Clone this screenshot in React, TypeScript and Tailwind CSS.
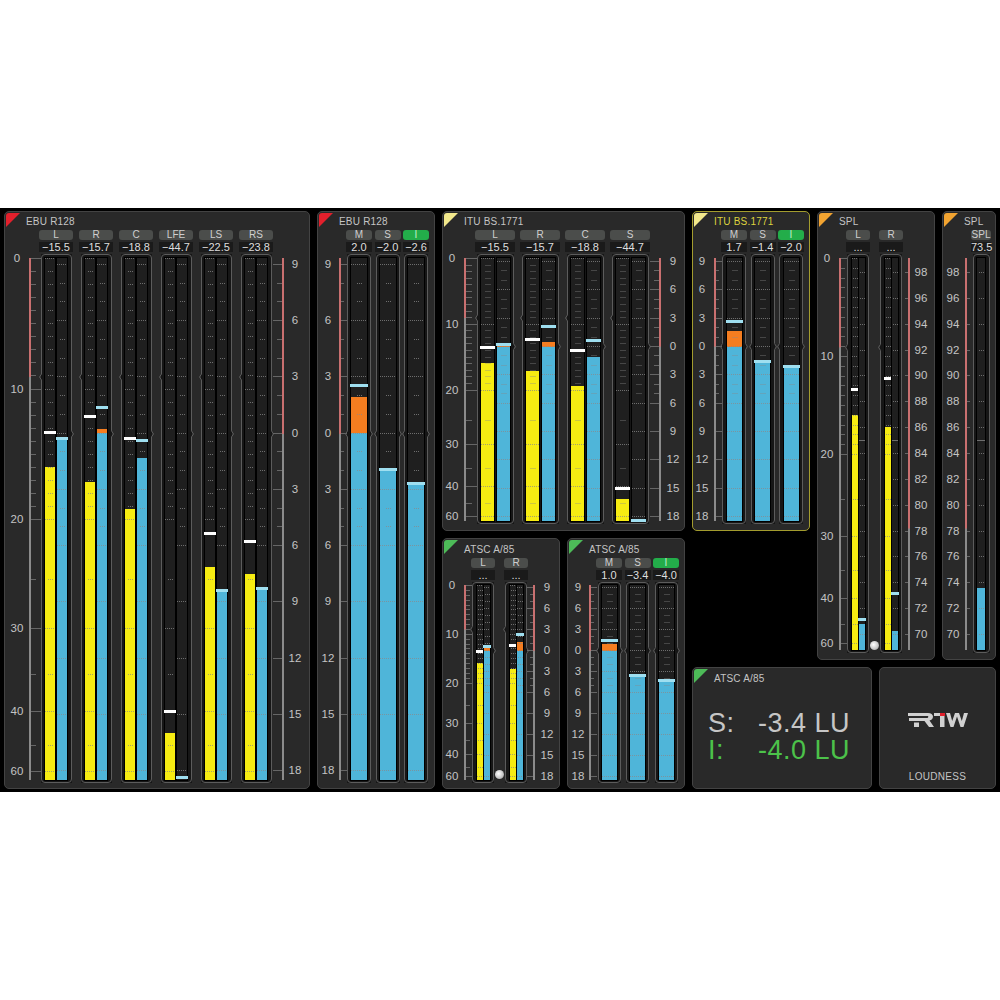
import React from 'react'

type Kind = 'lufs' | 'db' | 'spl'

type Side = { peak?: number; top?: number; orange?: number }
type Channel = { name: string; value: string; active?: boolean; l?: Side; r: Side }
type ScaleCfg = { kind: Kind; cls: string; line: number; label: number; major: number; pink: number }

const BAR_BOTTOM_GAP = 3

const lufsTable: Record<number, number> = { 25: 0.615, 30: 0.709, 35: 0.797, 40: 0.867, 50: 0.933, 60: 0.982 }
const lufsFrac = (v: number) => (v <= 20 ? v * 0.025 : lufsTable[v])
const dbFrac = (v: number) => 0.0115 + ((9 - v) / 27) * 0.9695
const splFrac = (v: number) => 0.0357 + ((98 - v) / 28) * 0.9233

function ticksFor(kind: Kind) {
  const out: { f: number; major: boolean }[] = []
  if (kind === 'lufs') {
    for (let v = 0; v <= 20; v++) out.push({ f: lufsFrac(v), major: v % 10 === 0 })
    for (const v of [25, 30, 35, 40, 50, 60]) out.push({ f: lufsFrac(v), major: v === 30 || v === 40 || v === 60 })
  } else if (kind === 'db') {
    for (let v = 9; v >= -18; v--) {
      const major = v % 3 === 0
      if (major || v > -6) out.push({ f: dbFrac(v), major })
    }
  } else {
    for (let v = 98; v >= 70; v -= 2) out.push({ f: splFrac(v), major: false })
  }
  return out
}

function labelsFor(kind: Kind) {
  if (kind === 'lufs') return [0, 10, 20, 30, 40, 60].map((v) => ({ t: String(v), f: lufsFrac(v) }))
  if (kind === 'db') {
    const out = []
    for (let v = 9; v >= -18; v -= 3) out.push({ t: String(Math.abs(v)), f: dbFrac(v) })
    return out
  }
  const out = []
  for (let v = 98; v >= 70; v -= 2) out.push({ t: String(v), f: splFrac(v) })
  return out
}

function Scale({ cfg, side, offset, height }: { cfg: ScaleCfg; side: 'left' | 'right'; offset: number; height: number }) {
  const dir = side === 'left' ? 1 : -1
  const start = cfg.line + dir * 1
  return (
    <div className={`shrink-0 ${cfg.cls}`} style={{ paddingTop: 24 + offset }}>
      <div className="relative" style={{ height }}>
        <svg className="absolute inset-0 overflow-visible" width="100%" height="100%">
          <rect x={cfg.line - 1} y={0} width={2} height={height} fill="#8b8b8b" />
          <rect x={cfg.line - 1} y={0} width={2} height={height * cfg.pink} fill="#c97070" />
          {ticksFor(cfg.kind).map((t, i) => {
            const y = Math.round(t.f * height) + 0.5
            const len = t.major ? cfg.major : Math.ceil(cfg.major * 0.5)
            return <line key={i} x1={start} x2={start + dir * len} y1={y} y2={y} stroke="#666666" />
          })}
        </svg>
        {labelsFor(cfg.kind).map((l) => (
          <span
            key={l.t + l.f}
            className="absolute -translate-x-1/2 -translate-y-1/2 text-[11.5px] leading-none text-[#c4c4c4]"
            style={{ left: cfg.label, top: Math.round(l.f * height) + 1 }}
          >
            {l.t}
          </span>
        ))}
      </div>
    </div>
  )
}

function StripTicks({ kind, height }: { kind: Kind; height: number }) {
  const ticks = ticksFor(kind)
  return (
    <svg className="absolute inset-0 overflow-hidden" width="100%" height="100%">
      {ticks
        .filter((t) => t.major)
        .map((t, i) => {
          const y = Math.round(t.f * height) + 0.5
          return <line key={i} x1="0" x2="100%" y1={y} y2={y} stroke="#8a8a8a" strokeOpacity="0.75" strokeDasharray="1 1" />
        })}
      {kind === 'spl' && <line x1="0" x2="100%" y1={Math.round(0.464 * height) + 0.5} y2={Math.round(0.464 * height) + 0.5} stroke="#8a8a8a" strokeOpacity="0.75" />}
      {ticks
        .filter((t) => !t.major)
        .map((t, i) => (
          <g key={i} fill="#8a8a8a" fillOpacity="0.75">
            <rect x="50%" y={Math.round(t.f * height)} width="1" height="1" transform="translate(-2 0)" />
            <rect x="50%" y={Math.round(t.f * height)} width="1" height="1" />
            <rect x="50%" y={Math.round(t.f * height)} width="1" height="1" transform="translate(2 0)" />
          </g>
        ))}
    </svg>
  )
}

function Strip({ side, color, kind, top, height, cls }: { side: Side; color: 'yellow' | 'blue'; kind: Kind; top: number; height: number; cls: string }) {
  const fill = color === 'yellow' ? 'bg-[#f6ec12]' : 'bg-[#4fb5d9]'
  const mark = color === 'yellow' ? 'bg-white' : 'bg-[#9fdff0]'
  return (
    <div className={`relative h-full bg-[#1f1f1f] ring-1 ring-black ${cls}`}>
      {side.top !== undefined && (
        <div className={`absolute inset-x-0 bottom-0 ${fill}`} style={{ top: side.top - top }} />
      )}
      {side.orange !== undefined && side.top !== undefined && (
        <div className="absolute inset-x-0 bg-[#f47d20]" style={{ top: side.orange - top, height: side.top - side.orange }} />
      )}
      <StripTicks kind={kind} height={height} />
      {side.peak !== undefined && <div className={`absolute -inset-x-px h-[3px] ${mark}`} style={{ top: side.peak - top - 1 }} />}
    </div>
  )
}

function FrameLine({ w, h, notchL, notchR }: { w: number; h: number; notchL?: number; notchR?: number }) {
  const r = 4
  const right = notchR !== undefined ? `V${notchR - 3}L${w + 1.5} ${notchR}L${w - 0.5} ${notchR + 3}` : ''
  const left = notchL !== undefined ? `V${notchL + 3}L-1.5 ${notchL}L0.5 ${notchL - 3}` : ''
  const d = `M${r} 0.5H${w - r}Q${w - 0.5} 0.5 ${w - 0.5} ${r}${right}V${h - r}Q${w - 0.5} ${h - 0.5} ${w - r} ${h - 0.5}H${r}Q0.5 ${h - 0.5} 0.5 ${h - r}${left}V${r}Q0.5 0.5 ${r} 0.5Z`
  return (
    <svg className="absolute left-0 top-0 overflow-visible" width={w} height={h}>
      <path d={d} fill="none" stroke="#5c5c5c" />
    </svg>
  )
}

type MeterPanelProps = {
  title: string
  titleCls?: string
  tag: string
  cls: string
  headCls: string
  chipCls: string
  frameW: number
  frameCls: string
  stripCls: string
  stripGap: string
  gap: string
  top: number
  offset: number
  height: number
  channels: Channel[]
  leftScale: ScaleCfg
  rightScale?: ScaleCfg
  kinds: { l?: Kind; r: Kind }
  notchL?: number
  notchR?: number
  led?: string
}

function Corner({ color }: { color: string }) {
  return <div className={`absolute left-px top-px h-[14px] w-[14px] rounded-tl-[3px] [clip-path:polygon(0_0,100%_0,0_100%)] ${color}`} />
}

function MeterPanel(p: MeterPanelProps) {
  const frameH = p.offset + p.height + BAR_BOTTOM_GAP
  return (
    <div className={`relative box-border shrink-0 rounded-[5px] border bg-[#292929] ${p.cls}`}>
      <Corner color={p.tag} />
      <div className={`pl-[21px] text-[10px] leading-[12px] tracking-[0.2px] ${p.headCls} ${p.titleCls ?? 'text-[#c4c4c4]'}`}>{p.title}</div>
      <div className="flex">
        <Scale cfg={p.leftScale} side="left" offset={p.offset} height={p.height} />
        <div className={`flex ${p.gap}`}>
          {p.channels.map((c) => (
            <div key={c.name} className={`flex flex-col ${p.chipCls}`}>
              <div className={`h-[10px] rounded-[3px] text-center text-[10px] leading-[10px] ${c.active ? 'bg-[#23ad4a] text-[#bff0c8]' : 'bg-[#4b4d4b] text-[#cfcfcf]'}`}>{c.name}</div>
              <div className="mt-[2px] h-[10px] whitespace-nowrap bg-[#1a1a1a] text-center text-[11px] leading-[10px] text-[#dedede]">{c.value}</div>
              <div className={`relative mx-auto mt-[2px] bg-[#161616] ${p.frameCls}`} style={{ height: frameH }}>
                <div className={`absolute inset-x-0 flex justify-center ${p.stripGap}`} style={{ top: p.offset, height: p.height }}>
                  {c.l && <Strip side={c.l} color="yellow" kind={p.kinds.l ?? 'lufs'} top={p.top} height={p.height} cls={p.stripCls} />}
                  <Strip side={c.r} color="blue" kind={p.kinds.r} top={p.top} height={p.height} cls={p.stripCls} />
                </div>
                <FrameLine w={p.frameW} h={frameH} notchL={p.notchL !== undefined ? p.offset + p.notchL * p.height : undefined} notchR={p.notchR !== undefined ? p.offset + p.notchR * p.height : undefined} />
              </div>
            </div>
          ))}
        </div>
        {p.rightScale && <Scale cfg={p.rightScale} side="right" offset={p.offset} height={p.height} />}
      </div>
      {p.led && <div className={`absolute h-[9px] w-[9px] rounded-full bg-[radial-gradient(circle_at_40%_40%,#ffffff,#c4c4c4_60%,#777777)] ${p.led}`} />}
    </div>
  )
}

const PINK_LUFS = 0.228
const ZERO_DB = 0.337

export default function App() {
  const border = 'border-[#434343]'
  return (
    <div className="min-h-screen bg-white pt-[208px] font-['Liberation_Sans',Arial,sans-serif]">
      <div className="flex h-[584px] gap-[7px] bg-black pl-[4px] pt-[3px]">
        <MeterPanel
          title="EBU R128"
          tag="bg-[#e2202c]"
          cls={`h-[578px] w-[306px] ${border}`}
          headCls="h-[18px] pt-[4px]"
          chipCls="w-[34px]"
          frameW={31}
          frameCls="w-[31px]"
          stripCls="w-[10px]"
          stripGap="gap-[2px]"
          gap="gap-[6px]"
          top={258}
          offset={4}
          height={522}
          leftScale={{ kind: 'lufs', cls: 'w-[34px]', line: 25, label: 12, major: 10, pink: PINK_LUFS }}
          rightScale={{ kind: 'db', cls: 'w-[35px]', line: 10, label: 22, major: 9, pink: ZERO_DB }}
          kinds={{ l: 'lufs', r: 'db' }}
          notchL={PINK_LUFS}
          notchR={ZERO_DB}
          channels={[
            { name: 'L', value: '−15.5', l: { peak: 432, top: 467 }, r: { peak: 438, top: 439 } },
            { name: 'R', value: '−15.7', l: { peak: 416, top: 482 }, r: { peak: 407, top: 433, orange: 429 } },
            { name: 'C', value: '−18.8', l: { peak: 438, top: 509 }, r: { peak: 440, top: 458 } },
            { name: 'LFE', value: '−44.7', l: { peak: 711, top: 733 }, r: { peak: 777 } },
            { name: 'LS', value: '−22.5', l: { peak: 533, top: 567 }, r: { peak: 590, top: 592 } },
            { name: 'RS', value: '−23.8', l: { peak: 541, top: 574 }, r: { peak: 588, top: 590 } },
          ]}
        />
        <MeterPanel
          title="EBU R128"
          tag="bg-[#e2202c]"
          cls={`h-[578px] w-[118px] ${border}`}
          headCls="h-[18px] pt-[4px]"
          chipCls="w-[26px]"
          frameW={24}
          frameCls="w-[24px]"
          stripCls="w-[16px]"
          stripGap=""
          gap="gap-[2.5px]"
          top={258}
          offset={4}
          height={522}
          leftScale={{ kind: 'db', cls: 'w-[28px]', line: 22, label: 10, major: 6, pink: ZERO_DB }}
          kinds={{ r: 'db' }}
          notchL={ZERO_DB}
          notchR={ZERO_DB}
          channels={[
            { name: 'M', value: '2.0', r: { peak: 385, top: 433, orange: 397 } },
            { name: 'S', value: '−2.0', r: { peak: 469, top: 471 } },
            { name: 'I', value: '−2.6', active: true, r: { peak: 483, top: 485 } },
          ]}
        />

        <div className="flex w-[243px] shrink-0 flex-col gap-[7px]">
          <MeterPanel
            title="ITU BS.1771"
            tag="bg-[#f2e88c]"
            cls={`h-[320px] w-[243px] ${border}`}
            headCls="h-[18px] pt-[4px]"
            chipCls="w-[40px]"
            frameW={37}
            frameCls="w-[37px]"
            stripCls="w-[13px]"
            stripGap="gap-[3px]"
            gap="gap-[5px]"
            top={258}
            offset={4}
            height={263}
            leftScale={{ kind: 'lufs', cls: 'w-[32px]', line: 22, label: 9, major: 11, pink: PINK_LUFS }}
            rightScale={{ kind: 'db', cls: 'w-[33px]', line: 10, label: 23, major: 9, pink: ZERO_DB }}
            kinds={{ l: 'lufs', r: 'db' }}
            notchL={PINK_LUFS}
            notchR={ZERO_DB}
            channels={[
              { name: 'L', value: '−15.5', l: { peak: 347, top: 363 }, r: { peak: 344, top: 347, orange: 345 } },
              { name: 'R', value: '−15.7', l: { peak: 339, top: 371 }, r: { peak: 326, top: 347, orange: 342 } },
              { name: 'C', value: '−18.8', l: { peak: 350, top: 386 }, r: { peak: 340, top: 357 } },
              { name: 'S', value: '−44.7', l: { peak: 488, top: 499 }, r: { peak: 520 } },
            ]}
          />
          <div className="flex gap-[7px]">
            <MeterPanel
              title="ATSC A/85"
              tag="bg-[#4dbb58]"
              cls={`h-[251px] w-[118px] ${border}`}
              headCls="h-[19px] pt-[5px]"
              chipCls="w-[24px]"
              frameW={22}
              frameCls="w-[22px]"
              stripCls="w-[6px]"
              stripGap="gap-[1px]"
              gap="gap-[9px]"
              top={585}
              offset={3}
              height={195}
              leftScale={{ kind: 'lufs', cls: 'w-[28px]', line: 22, label: 9, major: 7, pink: PINK_LUFS }}
              rightScale={{ kind: 'db', cls: 'w-[30px]', line: 6, label: 19, major: 6, pink: ZERO_DB }}
              kinds={{ l: 'lufs', r: 'db' }}
              notchL={PINK_LUFS}
              notchR={ZERO_DB}
              led="left-[52px] top-[231px]"
              channels={[
                { name: 'L', value: '...', l: { peak: 651, top: 663 }, r: { peak: 646, top: 651, orange: 648 } },
                { name: 'R', value: '...', l: { peak: 645, top: 669 }, r: { peak: 634, top: 651, orange: 642 } },
              ]}
            />
            <MeterPanel
              title="ATSC A/85"
              tag="bg-[#4dbb58]"
              cls={`h-[251px] w-[118px] ${border}`}
              headCls="h-[19px] pt-[5px]"
              chipCls="w-[26px]"
              frameW={23}
              frameCls="w-[23px]"
              stripCls="w-[15px]"
              stripGap=""
              gap="gap-[2.5px]"
              top={585}
              offset={3}
              height={195}
              leftScale={{ kind: 'db', cls: 'w-[28px]', line: 22, label: 10, major: 6, pink: ZERO_DB }}
              kinds={{ r: 'db' }}
              notchL={ZERO_DB}
              notchR={ZERO_DB}
              channels={[
                { name: 'M', value: '1.0', r: { peak: 640, top: 651, orange: 644 } },
                { name: 'S', value: '−3.4', r: { peak: 675, top: 677 } },
                { name: 'I', value: '−4.0', active: true, r: { peak: 680, top: 682 } },
              ]}
            />
          </div>
        </div>

        <div className="flex w-[305px] shrink-0 flex-col gap-[7px]">
          <div className="flex h-[449px] items-start gap-[7px]">
            <MeterPanel
              title="ITU BS.1771"
              titleCls="text-[#dcd23e]"
              tag="bg-[#f2e88c]"
              cls="h-[320px] w-[118px] border-[#a39c2e]"
              headCls="h-[18px] pt-[4px]"
              chipCls="w-[26px]"
              frameW={24}
              frameCls="w-[24px]"
              stripCls="w-[15px]"
              stripGap=""
              gap="gap-[2.5px]"
              top={258}
              offset={4}
              height={263}
              leftScale={{ kind: 'db', cls: 'w-[28px]', line: 22, label: 9, major: 6, pink: ZERO_DB }}
              kinds={{ r: 'db' }}
              notchL={ZERO_DB}
              notchR={ZERO_DB}
              channels={[
                { name: 'M', value: '1.7', r: { peak: 321, top: 347, orange: 331 } },
                { name: 'S', value: '−1.4', r: { peak: 361, top: 363 } },
                { name: 'I', value: '−2.0', active: true, r: { peak: 366, top: 368 } },
              ]}
            />
            <MeterPanel
              title="SPL"
              tag="bg-[#f2a431]"
              cls={`h-[449px] w-[118px] ${border}`}
              headCls="h-[18px] pt-[4px]"
              chipCls="w-[24px]"
              frameW={22}
              frameCls="w-[22px]"
              stripCls="w-[6px]"
              stripGap="gap-[1px]"
              gap="gap-[9px]"
              top={258}
              offset={4}
              height={392}
              leftScale={{ kind: 'lufs', cls: 'w-[28px]', line: 22, label: 9, major: 7, pink: PINK_LUFS }}
              rightScale={{ kind: 'spl', cls: 'w-[30px]', line: 6, label: 18, major: 6, pink: 0.69 }}
              kinds={{ l: 'lufs', r: 'spl' }}
              notchL={PINK_LUFS}
              led="left-[52px] top-[429px]"
              channels={[
                { name: 'L', value: '...', l: { peak: 389, top: 415 }, r: { peak: 619, top: 624 } },
                { name: 'R', value: '...', l: { peak: 378, top: 427 }, r: { peak: 593, top: 631 } },
              ]}
            />
            <MeterPanel
              title="SPL"
              tag="bg-[#f2a431]"
              cls={`h-[449px] w-[54px] ${border}`}
              headCls="h-[18px] pt-[4px]"
              chipCls="w-[20px]"
              frameW={17}
              frameCls="w-[17px]"
              stripCls="w-[8px]"
              stripGap=""
              gap=""
              top={258}
              offset={4}
              height={392}
              leftScale={{ kind: 'spl', cls: 'w-[28px]', line: 23, label: 10, major: 5, pink: 0.69 }}
              kinds={{ r: 'spl' }}
              channels={[{ name: 'SPL', value: '73.5', r: { top: 588 } }]}
            />
          </div>
          <div className="flex gap-[7px]">
            <div className={`relative box-border h-[122px] w-[180px] rounded-[5px] border bg-[#292929] ${border}`}>
              <Corner color="bg-[#4dbb58]" />
              <div className="pl-[21px] pt-[5px] text-[10px] leading-[12px] tracking-[0.2px] text-[#c4c4c4]">ATSC A/85</div>
              <div className="mt-[25px] grid grid-cols-[50px_1fr] pl-[15px] text-[27px] leading-[27px] tracking-[0.5px] text-[#c6c6c6]">
                <span>S:</span>
                <span>-3.4 LU</span>
                <span className="text-[#4cc24a]">I:</span>
                <span className="text-[#4cc24a]">-4.0 LU</span>
              </div>
            </div>
            <div className={`box-border flex h-[122px] w-[117px] flex-col items-center rounded-[5px] border bg-[#292929] ${border}`}>
              <svg className="mt-[45px]" width="60" height="14" viewBox="0 0 60 14">
                <path d="M0 0h20c3 0 5 1.500 5 3.700 0 2-1.500 3.300-3.500 3.700L26 14h-5l-4.500-6H1V5h17.500c1.200 0 1.800-.4 1.800-1.200S19.700 3 18.500 3H0z" fill="#d0d0d0" />
                <path d="M6 9.500h5V14H6z" fill="#d0d0d0" />
                <path d="M26 0h6v3h-6z" fill="#d0d0d0" />
                <path d="M32 0h5v3h-5z" fill="#e0202c" />
                <path d="M32 3h4.500v11H32z" fill="#d0d0d0" />
                <path d="M38 0l4.500 14h3L49 3.500 52.500 14h3L60 0h-4l-2.200 8L51 0h-4l-2.800 8L42 0z" fill="#d0d0d0" />
              </svg>
              <div className="mt-auto pb-[5px] text-[10px] leading-[12px] tracking-[0.3px] text-[#c4c4c4]">LOUDNESS</div>
            </div>
          </div>
        </div>
      </div>
    </div>
  )
}
